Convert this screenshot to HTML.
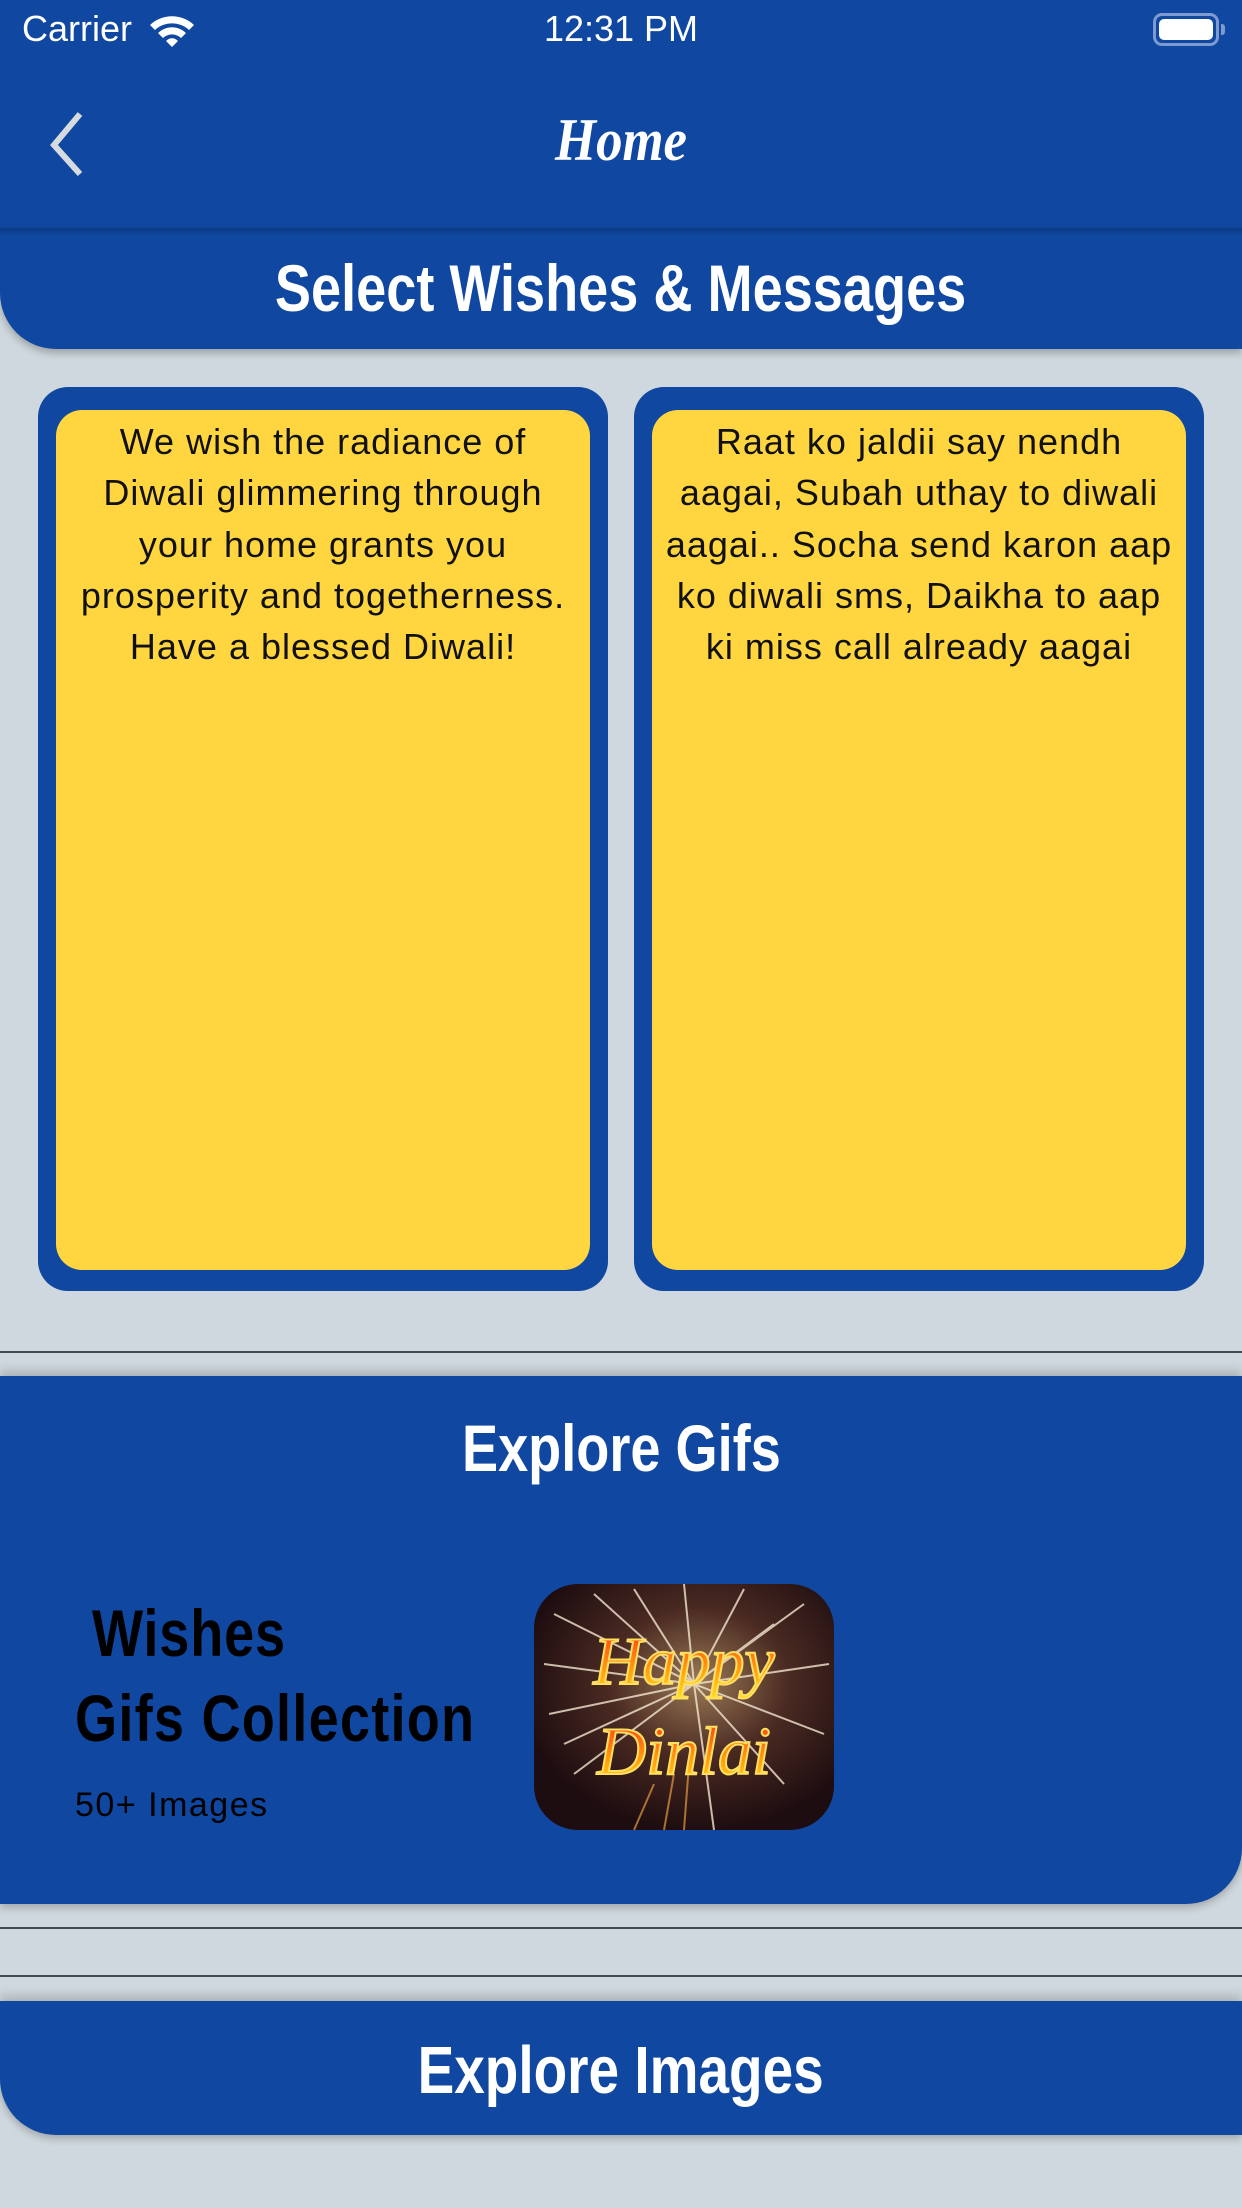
<!DOCTYPE html>
<html><head><meta charset="utf-8">
<style>
*{margin:0;padding:0;box-sizing:border-box}
html,body{width:1242px;height:2208px;overflow:hidden;background:#cfd8de;font-family:"Liberation Sans",sans-serif}
.abs{position:absolute}
.blue{background:#0f47a1}
.cond{font-family:"Liberation Sans Narrow","Liberation Sans",sans-serif;font-weight:bold;display:inline-block;transform:scaleX(0.82);transform-origin:center;white-space:nowrap}
.card{position:absolute;top:387px;width:570px;height:904px;background:#0f47a1;border-radius:30px}
.inner{position:absolute;left:18px;top:23px;width:534px;height:860px;background:#ffd640;border-radius:26px;text-align:center;font-size:36px;line-height:51.3px;color:#111;padding-top:6px;letter-spacing:1px;white-space:nowrap}
.line{position:absolute;left:0;width:1242px;height:2px;background:#3e4a50}
</style></head><body>
<div class="abs blue" style="left:0;top:0;width:1242px;height:228px"></div>
<div class="abs" style="left:22px;top:8px;font-size:36px;color:#fff">Carrier</div>
<svg class="abs" style="left:148px;top:13px" width="48" height="34" viewBox="0 0 48 34">
<path d="M2 12 A32 32 0 0 1 46 12 L41 17 A25 25 0 0 0 7 17 Z" fill="#fff"/>
<path d="M10 20 A20 20 0 0 1 38 20 L33 25 A13 13 0 0 0 15 25 Z" fill="#fff"/>
<path d="M18 28 A8 8 0 0 1 30 28 L24 34 Z" fill="#fff"/>
</svg>
<div class="abs" style="left:0;width:1242px;top:8px;text-align:center;font-size:36px;color:#fff">12:31 PM</div>
<div class="abs" style="left:1153px;top:13px;width:66px;height:33px;border:3px solid #7d9bd0;border-radius:9px"></div>
<div class="abs" style="left:1159px;top:19px;width:54px;height:21px;background:#fff;border-radius:5px"></div>
<div class="abs" style="left:1221px;top:24px;width:4px;height:11px;background:#7d9bd0;border-radius:0 3px 3px 0"></div>
<svg class="abs" style="left:44px;top:110px" width="44" height="66" viewBox="0 0 44 66"><path d="M36 4 L10 35 L36 64" stroke="#d6dbe0" stroke-width="6" fill="none"/></svg>
<div class="abs" style="left:0;width:1242px;top:106px;text-align:center;color:#fff;font-family:'Liberation Serif',serif;font-style:italic;font-weight:bold;font-size:60px"><span style="display:inline-block;transform:scaleX(0.88)">Home</span></div>

<div class="abs blue" style="left:0;top:228px;width:1242px;height:121px;border-bottom-left-radius:56px;box-shadow:0 4px 8px rgba(0,0,0,0.25)"></div>
<div class="abs" style="left:0;top:228px;width:1242px;height:8px;background:linear-gradient(rgba(0,0,0,0.18),rgba(0,0,0,0))"></div>
<div class="abs" style="left:0;width:1242px;top:250px;text-align:center;color:#fff;font-size:66px"><span class="cond">Select Wishes &amp; Messages</span></div>

<div class="card" style="left:38px"><div class="inner">We wish the radiance of<br>Diwali glimmering through<br>your home grants you<br>prosperity and togetherness.<br>Have a blessed Diwali!</div></div>
<div class="card" style="left:634px"><div class="inner">Raat ko jaldii say nendh<br>aagai, Subah uthay to diwali<br>aagai.. Socha send karon aap<br>ko diwali sms, Daikha to aap<br>ki miss call already aagai</div></div>

<div class="line" style="top:1351px"></div>
<div class="abs blue" style="left:0;top:1376px;width:1242px;height:528px;border-bottom-right-radius:56px;box-shadow:0 -6px 10px rgba(0,0,0,0.15),0 4px 8px rgba(0,0,0,0.2)"></div>
<div class="abs" style="left:0;width:1242px;top:1410px;text-align:center;color:#fff;font-size:66px"><span class="cond">Explore Gifs</span></div>
<div class="abs" style="left:92px;top:1595px;color:#000;font-size:66px;letter-spacing:1px"><span class="cond" style="transform-origin:left">Wishes</span></div>
<div class="abs" style="left:75px;top:1680px;color:#000;font-size:66px;letter-spacing:1.5px"><span class="cond" style="transform-origin:left">Gifs Collection</span></div>
<div class="abs" style="left:75px;top:1786px;color:#000;font-size:34px;letter-spacing:1.5px">50+ Images</div>

<svg class="abs" style="left:534px;top:1584px" width="300" height="246" viewBox="0 0 300 246">
<defs>
<clipPath id="c"><rect width="300" height="246" rx="44"/></clipPath>
<radialGradient id="g" cx="0.55" cy="0.4" r="0.6"><stop offset="0" stop-color="#9a7a55"/><stop offset="0.5" stop-color="#4a2a22"/><stop offset="1" stop-color="#1e0d10"/></radialGradient>
<linearGradient id="t" x1="0" y1="0" x2="0" y2="1"><stop offset="0" stop-color="#ff2a1a"/><stop offset="0.6" stop-color="#ff9a10"/><stop offset="1" stop-color="#ffe020"/></linearGradient>
</defs>
<g clip-path="url(#c)">
<rect width="300" height="246" fill="url(#g)"/>
<g stroke="#f4e6d0" stroke-width="2" opacity="0.8">
<line x1="160" y1="100" x2="20" y2="30"/><line x1="160" y1="100" x2="10" y2="80"/><line x1="160" y1="100" x2="15" y2="130"/>
<line x1="160" y1="100" x2="40" y2="190"/><line x1="160" y1="100" x2="100" y2="5"/><line x1="160" y1="100" x2="150" y2="0"/>
<line x1="160" y1="100" x2="210" y2="5"/><line x1="160" y1="100" x2="270" y2="20"/><line x1="160" y1="100" x2="295" y2="80"/>
<line x1="160" y1="100" x2="290" y2="150"/><line x1="160" y1="100" x2="250" y2="200"/><line x1="160" y1="100" x2="180" y2="246"/>
<line x1="160" y1="100" x2="60" y2="10"/><line x1="160" y1="100" x2="240" y2="40"/><line x1="160" y1="100" x2="30" y2="160"/>
</g>
<g stroke="#e59a40" stroke-width="2" opacity="0.7">
<line x1="130" y1="246" x2="140" y2="190"/><line x1="150" y1="246" x2="155" y2="180"/><line x1="100" y1="246" x2="120" y2="200"/>
</g>
<text x="150" y="100" text-anchor="middle" font-family="Liberation Serif,serif" font-style="italic" font-size="68" fill="url(#t)" stroke="#ffe060" stroke-width="2">Happy</text>
<text x="150" y="190" text-anchor="middle" font-family="Liberation Serif,serif" font-style="italic" font-size="68" fill="url(#t)" stroke="#ffe060" stroke-width="2">Dinlai</text>
</g>
</svg>

<div class="line" style="top:1927px"></div>
<div class="line" style="top:1975px"></div>
<div class="abs blue" style="left:0;top:2001px;width:1242px;height:134px;border-bottom-left-radius:56px;box-shadow:0 -6px 10px rgba(0,0,0,0.15),0 4px 8px rgba(0,0,0,0.2)"></div>
<div class="abs" style="left:0;width:1242px;top:2032px;text-align:center;color:#fff;font-size:67px"><span class="cond">Explore Images</span></div>
</body></html>
